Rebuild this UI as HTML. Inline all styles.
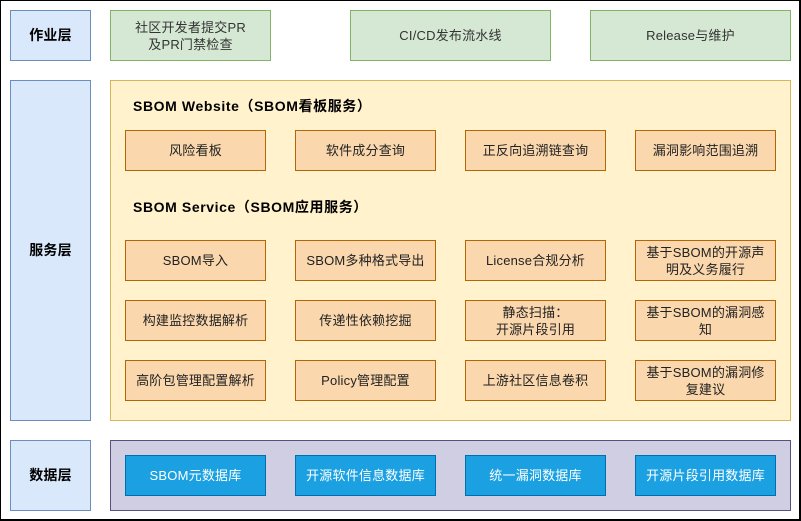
<!DOCTYPE html>
<html><head><style>
body{margin:0;width:801px;height:521px;position:relative;background:#fff;font-family:"Liberation Sans","Noto Sans CJK SC",sans-serif;overflow:hidden}
.b{position:absolute;box-sizing:border-box;display:flex;align-items:center;justify-content:center;text-align:center;font-size:13px;line-height:17px;color:#333;letter-spacing:0.2px}
.l{background:#dae8fc;border:1px solid #6c8ebf;font-weight:bold;color:#000;font-size:14px}
.g{background:#d5e8d4;border:1px solid #82b366}
.o{background:#fad7ac;border:1px solid #b46504;color:#222}
.u{background:#1ba1e2;border:1px solid #006eaf;color:#fff}
.t{position:absolute;font-weight:bold;font-size:14px;color:#000;letter-spacing:0.6px;white-space:nowrap}
</style></head><body>
<div style="position:absolute;left:0;top:0;width:801px;height:521px;box-sizing:border-box;border:1px solid #000;border-right-width:2px;border-bottom-width:2px"></div>
<div class="b l" style="left:10px;top:10px;width:81px;height:51px">作业层</div>
<div class="b l" style="left:10px;top:80px;width:81px;height:341px">服务层</div>
<div class="b l" style="left:10px;top:440px;width:81px;height:71px">数据层</div>
<div class="b g" style="left:110px;top:10px;width:161px;height:51px">社区开发者提交PR<br>及PR门禁检查</div>
<div class="b g" style="left:350px;top:10px;width:201px;height:51px">CI/CD发布流水线</div>
<div class="b g" style="left:590px;top:10px;width:201px;height:51px">Release与维护</div>
<div class="b" style="left:110px;top:80px;width:681px;height:341px;background:#fff2cc;border:1px solid #d6b656"></div>
<div class="t" style="left:133px;top:96px">SBOM Website（SBOM看板服务）</div>
<div class="t" style="left:133px;top:197px">SBOM Service（SBOM应用服务）</div>
<div class="b o" style="left:125px;top:130px;width:141px;height:41px">风险看板</div>
<div class="b o" style="left:295px;top:130px;width:141px;height:41px">软件成分查询</div>
<div class="b o" style="left:465px;top:130px;width:141px;height:41px">正反向追溯链查询</div>
<div class="b o" style="left:635px;top:130px;width:141px;height:41px">漏洞影响范围追溯</div>
<div class="b o" style="left:125px;top:240px;width:141px;height:41px">SBOM导入</div>
<div class="b o" style="left:295px;top:240px;width:141px;height:41px">SBOM多种格式导出</div>
<div class="b o" style="left:465px;top:240px;width:141px;height:41px">License合规分析</div>
<div class="b o" style="left:635px;top:240px;width:141px;height:41px">基于SBOM的开源声<br>明及义务履行</div>
<div class="b o" style="left:125px;top:300px;width:141px;height:41px">构建监控数据解析</div>
<div class="b o" style="left:295px;top:300px;width:141px;height:41px">传递性依赖挖掘</div>
<div class="b o" style="left:465px;top:300px;width:141px;height:41px">静态扫描：<br>开源片段引用</div>
<div class="b o" style="left:635px;top:300px;width:141px;height:41px">基于SBOM的漏洞感<br>知</div>
<div class="b o" style="left:125px;top:360px;width:141px;height:41px">高阶包管理配置解析</div>
<div class="b o" style="left:295px;top:360px;width:141px;height:41px">Policy管理配置</div>
<div class="b o" style="left:465px;top:360px;width:141px;height:41px">上游社区信息卷积</div>
<div class="b o" style="left:635px;top:360px;width:141px;height:41px">基于SBOM的漏洞修<br>复建议</div>
<div class="b" style="left:110px;top:440px;width:681px;height:71px;background:#d0cee2;border:1px solid #56517e"></div>
<div class="b u" style="left:125px;top:455px;width:141px;height:41px">SBOM元数据库</div>
<div class="b u" style="left:295px;top:455px;width:141px;height:41px">开源软件信息数据库</div>
<div class="b u" style="left:465px;top:455px;width:141px;height:41px">统一漏洞数据库</div>
<div class="b u" style="left:635px;top:455px;width:141px;height:41px">开源片段引用数据库</div>
</body></html>
